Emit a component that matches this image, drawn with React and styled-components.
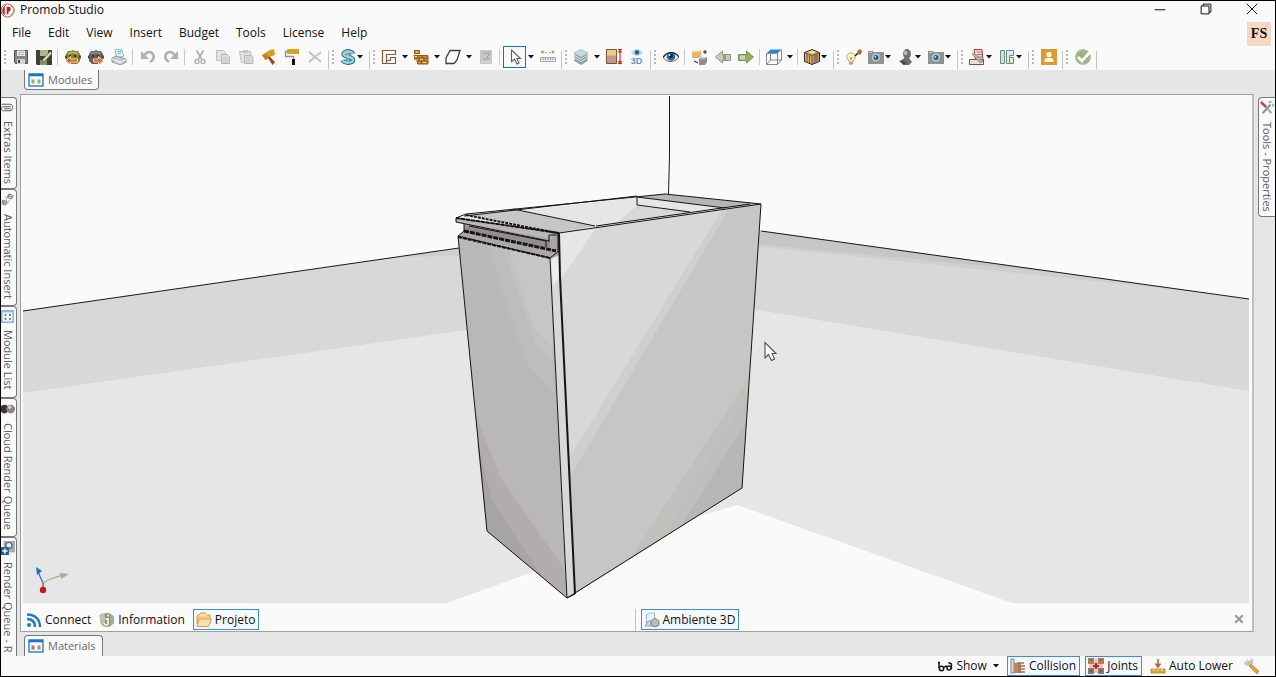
import React from 'react';
import styled, { createGlobalStyle, css } from 'styled-components';

const GlobalStyle = createGlobalStyle`
  *, *::before, *::after { box-sizing: border-box; }
  body { margin: 0; }
  body, button { font-family: "Open Sans", "Noto Sans", sans-serif; font-size: 12px; line-height: 16px; color: #111; }
  button { margin: 0; padding: 0; border: 0; background: none; }
  svg { display: block; flex: none; }
`;

const Frame = styled.div`
  display: flex;
  flex-direction: column;
  height: 100vh;
  border: 1px solid #000;
  background: #fafafa;
  overflow: hidden;
`;

const TitleBar = styled.header`
  display: flex;
  align-items: center;
  flex: none;
  height: 18px;
  padding-right: 17px;
  gap: 4px;
`;

const Title = styled.h1`
  flex: 1;
  margin: 0;
  font-size: 12px;
  font-weight: 400;
`;

const WindowButtons = styled.div`
  display: flex;
  gap: 34px;
  padding-bottom: 2px;
`;

const MenuBar = styled.nav`
  display: flex;
  align-items: flex-start;
  flex: none;
  height: 26px;
  padding: 2px 4px 0 11px;
  gap: 17px;
`;

const MenuItem = styled.button`
  height: 24px;
  white-space: nowrap;
`;

const Account = styled.button`
  flex: none;
  width: 24px;
  height: 24px;
  margin: 1px 0 0 auto;
  background: #f5d9c3;
  font: 700 14px/24px "Liberation Serif", serif;
`;

const ToolBar = styled.div`
  display: flex;
  align-items: flex-start;
  flex: none;
  height: 25px;
`;

const ToolGroup = styled.div`
  display: flex;
  align-items: center;
  flex: none;
  height: 24px;

  &::before {
    content: "";
    width: 2px;
    height: 14px;
    margin: 0 3px;
    background: repeating-linear-gradient(#b8b8b8 0 2px, transparent 2px 4px);
  }

  &::after {
    content: "";
    align-self: flex-end;
    width: 1px;
    height: 18px;
    margin-left: 2px;
    background: #c4c4c4;
  }
`;

const ToolButton = styled.button`
  display: flex;
  align-items: center;
  justify-content: center;
  flex: none;
  width: ${(p) => (p.$split ? 22 : 23)}px;
  height: 22px;
  ${(p) => p.$compact && css`
    width: 30px;
    justify-content: flex-start;
    gap: 1px;
    padding-left: 3px;
  `}
  ${(p) => p.$active && css`border: 1px solid #0a74d1;`}
`;

const ArrowButton = styled.button`
  display: flex;
  align-items: center;
  justify-content: center;
  width: 10px;
  height: 22px;
`;

const ToolSeparator = styled.span`
  width: 1px;
  height: 16px;
  margin: 0 3px 0 2px;
  background: #c8c8c8;
`;

const Workspace = styled.div`
  display: flex;
  flex: 1;
  min-height: 0;
  background: #e6e6e6;
`;

const Dock = styled.aside`
  display: flex;
  flex-direction: column;
  flex: none;
  width: ${(p) => (p.$side === 'left' ? 16 : 17)}px;
  padding-top: 27px;
  overflow: hidden;
`;

const DockTab = styled.button`
  display: flex;
  flex-direction: column;
  align-items: center;
  flex: none;
  width: 100%;
  height: ${(p) => p.$length}px;
  gap: 7px;
  border: 1px solid #777;
  background: #fafafa;
  color: #5c5c5c;
  font-size: 11px;
  ${(p) => (p.$side === 'left'
    ? css`padding: 3px 2px 0 0; border-left: 0; border-radius: 0 4px 4px 0;`
    : css`padding: 3px 0 0; border-right: 0; border-radius: 4px 0 0 4px;`)}
  ${(p) => p.$rest && css`
    flex: 1;
    border-bottom: 0;
    border-bottom-right-radius: 0;
  `}

  span { writing-mode: vertical-rl; white-space: nowrap; line-height: 14px; }
`;

const Center = styled.main`
  display: flex;
  flex-direction: column;
  flex: 1;
  min-width: 0;
  padding: 0 4px 0 3px;
`;

const PanelTabs = styled.div`
  display: flex;
  flex: none;
  height: 24px;
  padding: ${(p) => (p.$place === 'top' ? '0 4px 4px' : '3px 4px 0')};
`;

const PanelTab = styled.button`
  display: flex;
  align-items: center;
  gap: 4px;
  padding: 0 6px 0 3px;
  border: 1px solid #777;
  background: #fafafa;
  color: #6a6a6a;
  font-size: 11px;
  ${(p) => (p.$place === 'top'
    ? css`border-top: 0; border-radius: 0 0 4px 4px;`
    : css`border-bottom: 0; border-radius: 4px 4px 0 0;`)}
`;

const Viewport = styled.section`
  display: flex;
  flex-direction: column;
  flex: 1;
  min-height: 0;
  padding: 1px 3px 0 2px;
  border: 1px solid #a0a0a0;
  border-right: 2px solid #c0c0c0;
  background: #fafafa;
`;

const Scene = styled.svg`
  flex: 1;
  width: 100%;
  min-height: 0;
`;

const DocumentBar = styled.div`
  display: flex;
  align-items: flex-end;
  flex: none;
  height: 28px;
`;

const DocumentHalf = styled.div`
  display: flex;
  align-items: flex-start;
  flex: 1;
  height: 22px;
  gap: 8px;
  padding-left: ${(p) => (p.$second ? 5 : 3)}px;
  border-left: ${(p) => (p.$second ? '1px solid #c4c4c4' : '0')};
`;

const LabelButton = styled.button`
  display: flex;
  align-items: center;
  flex: none;
  height: ${(p) => (p.$tall ? 21 : 20)}px;
  gap: 3px;
  white-space: nowrap;
  ${(p) => p.$active && css`
    padding: 0 3px 0 2px;
    border: 1px solid #3b8ede;
    background: #f6f9fc;
  `}
`;

const CloseButton = styled.button`
  margin: 5px 5px 0 auto;
`;

const StatusBar = styled.footer`
  display: flex;
  align-items: center;
  justify-content: flex-end;
  flex: none;
  height: 20px;
  padding-right: 15px;
`;

const StatusItem = styled.div`
  margin-left: ${(p) => p.$gap}px;
`;

const Svg = ({ s = 16, children, ...rest }) => (
  <svg width={s} height={s} viewBox="0 0 16 16" fill="none" aria-hidden="true" {...rest}>{children}</svg>
);

const Arrow = () => (
  <svg width="6" height="4" viewBox="0 0 6 4" aria-hidden="true"><path d="M0 0h6L3 3.5z" fill="#111" /></svg>
);

const Robot = ({ body, lid, dir }) => (
  <Svg>
    <path d="M1 5l2-3h3l2-1 2 1h3l2 3v7l-3 3H4l-3-3z" fill={body} />
    <path d="M3 5c2-2 8-2 10 0" stroke={lid} strokeWidth="2" />
    <path d="M0 8h2M14 8h2" stroke="#4b4b45" strokeWidth="3" />
    <path d="M4 7h2M9 7h2" stroke="#24241c" strokeWidth="1.500" />
    {dir === 'left'
      ? <path d="M1 11.500l4.500-4v2.500h7v3h-7v2.500z" fill="#dd6420" stroke="#fff0d8" strokeWidth=".8" />
      : <path d="M15 11.500l-4.500-4v2.500h-5v3h5v2.500z" fill="#dd6420" stroke="#fff0d8" strokeWidth=".8" />}
  </Svg>
);

const Camera = () => (
  <Svg>
    <path d="M0 2h5v1h11v12H0z" fill="#8d9496" />
    <path d="M1 3.500h3" stroke="#c8cccc" />
    <circle cx="8" cy="8.500" r="4" fill="#b9c9d0" />
    <circle cx="8" cy="8.500" r="2.500" fill="#315a78" />
    <circle cx="7.300" cy="7.800" r=".9" fill="#d9eaf2" />
  </Svg>
);

const Panel = ({ a, b }) => (
  <Svg>
    <rect x="1" y="2" width="14" height="12" fill="#f4f8fa" stroke="#2a7fd0" strokeWidth="1.400" />
    <path d="M1 3h14" stroke="#1c73ca" strokeWidth="2.500" />
    <rect x="3.500" y="7.500" width="3" height="4" fill={a} />
    <rect x="9.500" y="7.500" width="3" height="4" fill={b} />
  </Svg>
);

const icons = {
  logo: (
    <Svg s={15}>
      <circle cx="7" cy="8" r="7" fill="#fff" stroke="#9c5a3c" />
      <path d="M7 2a6 6 0 0 0-3 11V5c0-2 1-3 3-3z" fill="#c32424" />
      <path d="M6 4h3a3 3 0 0 1 0 5H8v3H6z" fill="#b81f1f" />
      <path d="M10 2.500a6 6 0 0 1 0 11" stroke="#c98a62" strokeWidth="1.500" />
    </Svg>
  ),
  save: (
    <Svg>
      <path d="M1.500 1.500h13v13h-12l-1-1z" fill="#858585" stroke="#4f4f4f" />
      <path d="M4 1.500h8V7H4z" fill="#e9edf0" /><path d="M5 3.500h6M5 5.500h6" stroke="#9aa" strokeWidth=".8" />
      <path d="M4 10h8v5H4z" fill="#d4d4d4" /><path d="M5 11h2v3H5z" fill="#444" />
    </Svg>
  ),
  saveAs: (
    <Svg>
      <path d="M0 1h16v15H1l-1-1z" fill="#3f4036" />
      <path d="M4 1h8v6H4z" fill="#a9bd8c" /><path d="M4 11h7v5H4z" fill="#7f9468" />
      <path d="M14.500 2L7 10l-1.500 3.500L9 12l7-7.500z" fill="#e2d9a8" stroke="#52602c" strokeWidth=".8" />
    </Svg>
  ),
  print: (
    <Svg>
      <path d="M4 1l6-1 3 7-7 2z" fill="#eaf5fc" stroke="#7db6dc" />
      <path d="M6 3l4-1M7 5l3-1" stroke="#59a5d8" />
      <path d="M1 9l4-2 10 3v3l-5 3-9-3z" fill="#c4c6c8" stroke="#808488" strokeWidth=".8" />
      <path d="M1 10l9 3 5-2.500M4 12.500l6 2" stroke="#f2f2f2" />
    </Svg>
  ),
  undo: <Svg><path d="M1 2v8h8z" fill="#b0b0b0" /><path d="M4 7c2-4 5-5 8-3 3 3 2 7-2 9" stroke="#b0b0b0" strokeWidth="2.500" /></Svg>,
  redo: <Svg><path d="M15 2v8H7z" fill="#b0b0b0" /><path d="M12 7C10 3 7 2 4 4c-3 3-2 7 2 9" stroke="#b0b0b0" strokeWidth="2.500" /></Svg>,
  cut: <Svg><path d="M4.500 1.500l5.500 9M11.500 1.500l-5.500 9" stroke="#ababab" strokeWidth="1.600" /><circle cx="5" cy="12.500" r="2" stroke="#b5b5b5" strokeWidth="1.500" /><circle cx="11" cy="12.500" r="2" stroke="#b5b5b5" strokeWidth="1.500" /></Svg>,
  copy: <Svg><path d="M1.500 1.500h7l2 2v8h-9z" fill="#e2e2e2" stroke="#bcbcbc" /><path d="M6.500 5.500h6l2 2v7h-8z" fill="#dedede" stroke="#b4b4b4" /><path d="M8 9h5M8 11h5M8 13h5" stroke="#bbb" strokeWidth=".7" /></Svg>,
  paste: <Svg><path d="M1.500 2.500h11l1 11h-10z" fill="#e4e4e4" stroke="#bbb" /><path d="M5 1h5v3H5z" fill="#c2c2c2" /><path d="M6.500 6.500h7l1.500 2v6H6.500z" fill="#dcdcdc" stroke="#b4b4b4" /><path d="M8 9h5M8 11h5M8 13h5" stroke="#bbb" strokeWidth=".7" /></Svg>,
  hammer: <Svg><path d="M1 6l8-5 4-1 1 6-6 2-3 3z" fill="#d99a2c" /><path d="M1 6l3.500 5 3-2-2-4z" fill="#bf7f1c" /><path d="M8 7l6 6-2.500 3-4.500-7z" fill="#8b4a1c" /></Svg>,
  roller: <Svg><path d="M3 0h12v5H3z" fill="#d6a32c" /><path d="M3 2.500H1.500V7.500H9.500V10" stroke="#8e8e8e" strokeWidth="1.300" /><path d="M8 10h3v6H8z" fill="#111" /></Svg>,
  remove: <Svg><path d="M2 3l12 10M14 3L2 13" stroke="#c2c2c2" strokeWidth="2" /></Svg>,
  dollar: (
    <Svg>
      <path d="M8 0v16" stroke="#38718f" strokeWidth="3.400" />
      <path d="M13 5c-1-3-9.500-3.500-9.500 0 0 3.500 9.500 2 9.500 6 0 3.500-9 3.500-10.500 0" stroke="#2f6d92" strokeWidth="4.400" />
      <path d="M13 5c-1-3-9.500-3.500-9.500 0 0 3.500 9.500 2 9.500 6 0 3.500-9 3.500-10.500 0" stroke="#9ad0dc" strokeWidth="2.400" />
      <path d="M8 1v14" stroke="#9ad0dc" strokeWidth="1.400" /><path d="M4 4l3 1M9 3l3 1" stroke="#b5d76a" />
    </Svg>
  ),
  walls: <Svg><path d="M1.500 14.500v-13h13v4h-9v9z" stroke="#8a5a3c" strokeWidth="1.200" /><path d="M5.500 14.500h9v-6h-5v3h-4" stroke="#6b625c" strokeWidth="1.100" /></Svg>,
  bricks: (
    <Svg>
      <path d="M1 1h5v4H1zM1 7h9v4H1zM5 11h10v4H5zM10 7h5v4h-5z" fill="#d18a35" />
      <path d="M1.500 1.500h5v3h-5zM.500 6.500h14.500M1 9h14M3 12h12M4 6.500v2.500M9 6.500v2.500M6 9v3M11 9v3M8.500 12v3M4.500 12v3H15v-8.500" stroke="#8c4812" strokeWidth=".9" />
      <path d="M2 7.700h2M7 10.500h3M10 13.500h3M3 3h2" stroke="#fae0b6" />
    </Svg>
  ),
  shape: <Svg><path d="M5 1.500h10l-3 9.500-3 3.500H1V9z" fill="#fdfdfd" stroke="#4b3344" strokeWidth="1.300" /></Svg>,
  report: <Svg><path d="M2 1h12v14H2z" fill="#c6c6c6" /><path d="M5 4h6v2l-2 2 2 2M5 10h6" stroke="#a0a0a0" /><path d="M3 13h10" stroke="#e2e2e2" /></Svg>,
  pointer: <Svg><path d="M4.500 1v11.500l3-2.500 2.500 5 2-1-2.200-4.500h3.700z" fill="#fff" stroke="#6c5860" strokeWidth="1.100" /></Svg>,
  measure: <Svg><circle cx="2.500" cy="3" r="1.500" fill="#d29a45" /><circle cx="13" cy="3" r="1.500" fill="#d29a45" /><path d="M5 3.500h1.500M9 3.500h1.500" stroke="#999" /><path d="M.500 8.500h15v4H.500z" fill="#e8e8e8" stroke="#aaa" /><path d="M3 9v2M5.500 9v2M8 9v2M10.500 9v2M13 9v2" stroke="#888" strokeWidth=".8" /></Svg>,
  layers: (
    <Svg>
      <path d="M1.500 5L8 8l6.500-3v7L8 16l-6.500-4z" fill="#8d9aa2" />
      <path d="M1.500 6.500L8 10l6.500-3.500M1.500 9L8 12.500 14.500 9" stroke="#dfe7ea" />
      <path d="M8 .500L15 4 8 8 1 4z" fill="#c8dce8" stroke="#95a8b2" strokeWidth=".7" />
    </Svg>
  ),
  door: <Svg><path d="M.500.500h10v14H.500z" fill="#f0cf7c" stroke="#6e5941" /><path d="M1 7c4-2 6 1 9-1v8H1z" fill="#c49a86" /><path d="M12 .500h4M12 14.500h4M14 1v13M12.500 3.500L14 1l1.500 2.500M12.500 12L14 14.500l1.500-2.500" stroke="#d12c24" strokeWidth="1.200" /></Svg>,
  eye: <Svg><path d="M0 8.500C4 2 12 2 16 8c-4 6-12 6-16 .500z" fill="#e6edf2" stroke="#574850" strokeWidth=".8" /><circle cx="8" cy="7.500" r="4.300" fill="#2a6da4" /><circle cx="8" cy="7" r="2" fill="#0c2440" /><circle cx="6.500" cy="6" r="1" fill="#e4f2fa" /><path d="M0 8.500C4 2 12 2 16 8" stroke="#332830" strokeWidth="1.300" /></Svg>,
  boxes: <Svg><path d="M0 3l2-2h7v6L7 9H0z" fill="#e7b56a" /><path d="M0 3l2-2h7L7 3z" fill="#fae0b4" /><path d="M7 10l2-2h6v5l-2 3H7z" fill="#8a8e8c" /><path d="M7 10l2-2h6l-2 2z" fill="#c6cac8" /><path d="M13 1v4M11 3h4M2 12l4 2" stroke="#3c2a40" strokeWidth="1.100" /></Svg>,
  prev: <Svg><path d="M.500 8l7-6v3.500h8v6h-8V14z" fill="#c7ccc0" stroke="#8c9285" /><path d="M8 5.500h3v6H8z" fill="#8faa5c" /></Svg>,
  next: <Svg><path d="M15.500 8l-7-6v3.500h-8v6h8V14z" fill="#96b255" stroke="#7b8e5c" /><path d="M2 6.500h5v4H2z" fill="#ccd4bc" /></Svg>,
  wireCube: <Svg><path d="M4.500.500h11l-4 4H.500z" fill="#2b87cb" /><path d="M.500 4.500h11v11H.500zM11.500 15.500l4-4.500V.500M.500 15.500l4-4.500h11M4.500 5v6" stroke="#7e8a92" /></Svg>,
  woodCube: <Svg><path d="M8 .500l7.500 3v9L8 15.500l-7.500-3v-9z" fill="#d7b36e" stroke="#3f262b" /><path d="M.500 3.500L8 6.500l7.500-3M8 6.500v9M3 5v8M5.500 5.500v9M11 5.500v8M13 5v8" stroke="#5b373a" strokeWidth=".8" /><path d="M4 3l4 1.500L12 3 8 1.500z" fill="#f4dca6" /><path d="M8 7v8l7-3V4z" fill="#8a4f48" fillOpacity=".3" /></Svg>,
  bulb: <Svg><path d="M3 12C-1 8 1 4 5 4s6 4 2 8v1H3z" fill="#fdf3e0" stroke="#dba24a" /><path d="M3 14.500h4" stroke="#999" strokeWidth="2" /><path d="M4 8l1 3 1-3" stroke="#e09a30" /><path d="M9 7l3-3" stroke="#222" strokeWidth="1.500" /><path d="M11 2l3-2 2 2-1 3-2 1z" fill="#b96a1e" /></Svg>,
  camera: <Camera />,
  render: <Svg><path d="M3 12l3-3h5l3 4-3 3H5z" fill="#707070" /><ellipse cx="9" cy="5" rx="4" ry="5" fill="#747474" /><circle cx="7.500" cy="4" r="2" fill="#bcbcbc" /><path d="M1 12l4-1 4 3-3 2z" fill="#4e4e4e" /></Svg>,
  docs: <Svg><path d="M5 .500h8l1 12H7z" fill="#f5e4dc" stroke="#a93b33" /><path d="M7.500 3h5M8 5.500h5M8.500 8h5" stroke="#b7584c" /><path d="M.500 10.500h14v5h-14z" fill="#f0dfcf" stroke="#a93b33" /><path d="M3 5l2-1 9 8-3 2z" fill="#aeb4b6" stroke="#72787a" strokeWidth=".7" /></Svg>,
  plan: <Svg><path d="M1.500 1.500h4v13h-4z" fill="#c6e3e6" stroke="#6d8b80" /><path d="M7.500 14.500v-13h7v5h-4v8z" fill="#dcecea" stroke="#6d8b80" /><path d="M10.500 8.500h4v6h-4z" fill="#e8ead0" stroke="#7d8a64" /></Svg>,
  person: <Svg><path d="M0 0h16v16H0z" fill="#dc9a30" /><circle cx="8" cy="5.500" r="2.700" fill="#fff5dc" /><path d="M3.500 13V11c0-3 9-3 9 0v2z" fill="#fff5dc" /></Svg>,
  check: <Svg><circle cx="8" cy="8" r="7.800" fill="#96b472" /><circle cx="8" cy="8" r="6.500" stroke="#a9b59c" strokeWidth="1.500" /><path d="M3 8l4 4 8-9" stroke="#fff" strokeWidth="2.800" /></Svg>,
  modules: <Panel a="#a5ad62" b="#a5ad62" />,
  materials: <Panel a="#8a8078" b="#c88850" />,
  rss: <Svg><circle cx="3" cy="13" r="2" fill="#2478c8" /><path d="M1 7c5 0 8 3 8 8M1 2.500c8 0 13 5 13 12.500" stroke="#2478c8" strokeWidth="2.400" /></Svg>,
  info: <Svg><circle cx="8" cy="8" r="7" fill="#839c64" /><path d="M0 3l4-2 2 2v8l-4 1z" fill="#c0c0ba" /><path d="M11 2l4 2v7l-4 3z" fill="#a4a8a0" /><path d="M9 2.500v2M6.500 7H9v5c-1 2-4 1-4-1" stroke="#f0f2e4" strokeWidth="1.800" /></Svg>,
  folder: <Svg><path d="M1 4l4-3h4l1 2h4v9H1z" fill="#f2d08c" stroke="#d09a3a" /><path d="M3 7h12.500l-3 7.500H1z" fill="#fae2ae" stroke="#d8a040" /><path d="M4 3h7" stroke="#fff8e4" /></Svg>,
  ambiente: <Svg><path d="M2.500 13V3l3-2h5v9" fill="#e7f2fa" stroke="#90bcdc" /><path d="M1 14l3-5h6l4 5z" fill="#c6d8e2" stroke="#7e98a8" strokeWidth=".8" /><path d="M7 9l4-3 4 3v4l-4 2-4-2z" fill="#bababa" stroke="#717171" strokeWidth=".8" /></Svg>,
  glasses: <Svg><path d="M2 4v6M1 4.500h2" stroke="#161616" strokeWidth="1.500" /><circle cx="4.500" cy="10.500" r="2.200" stroke="#161616" strokeWidth="1.500" /><circle cx="12" cy="10" r="2" stroke="#161616" strokeWidth="1.500" /><path d="M7 9l3-1M14.500 11V6l-3-1.500" stroke="#161616" strokeWidth="1.400" /></Svg>,
  collision: <Svg><path d="M1 1h3v14H1z" fill="#dae2e6" stroke="#77828a" /><path d="M4 5h7v10H4z" fill="#b98364" /><path d="M7 5h7M8 8h7M8 11h7M8 14h7" stroke="#a86d4a" strokeWidth="1.400" /></Svg>,
  joints: <Svg><path d="M0 0h6v6H0zM10 0h6v6h-6z" fill="#b57d5c" /><path d="M0 10h6v6H0zM10 10h6v6h-6z" fill="#8c776a" /><path d="M6 1h4v14H6zM1 6h14v4H1z" fill="#e4cbb6" /><path d="M2 2h2M12 2h2M2 13h2M12 13h2" stroke="#5e463a" /><path d="M8 5v6M5 8h6" stroke="#d41c24" strokeWidth="2" /></Svg>,
  lower: <Svg><path d="M8 1v7M5.500 5.500L8 9l2.500-3.500" stroke="#b9623a" strokeWidth="1.600" /><path d="M1 11h14v4H1z" fill="#e0a640" stroke="#b98428" strokeWidth=".8" /><path d="M4 11v2M8 11v2M12 11v2" stroke="#fff0c4" /></Svg>,
  wrench: <Svg><path d="M2 0l2 3 3-1V0c3 2 3 4 1 7L5 8C2 8 0 6 0 3l3 2" fill="#c2c4c4" /><path d="M7 6l8 7-2 3-8-8z" fill="#dfa33c" stroke="#b67f22" strokeWidth=".6" /></Svg>,
  clip: <Svg s={13}><path d="M1 4h10c4.500 0 4.500 8 0 8H3c-3.500 0-3.500-5 0-5h9M4 9.500h8" stroke="#555" strokeWidth="1.200" /></Svg>,
  auto: <Svg s={14}><path d="M9 1l5 2-2 4-5-2zM2 8l5 2-2 4-4-2z" fill="#ddd" stroke="#777" /><path d="M8 3l5 2M2 10l4 2M10 1L8 5M4 9l-2 4" stroke="#777" /><path d="M5 4l2 6M10 8l-3 5" stroke="#aaa" /></Svg>,
  list: <Svg s={13}><path d="M1 1h14v14H1z" fill="#eef6fc" stroke="#6aa5d4" strokeWidth="1.500" /><path d="M1 2h14" stroke="#8abce2" strokeWidth="2" /><path d="M4.500 6h2M10 6h2M4.500 11h2M10 11h2" stroke="#5b6540" strokeWidth="2.200" /></Svg>,
  cloud: <Svg s={14}><circle cx="4" cy="8" r="5" fill="#43302e" /><circle cx="11" cy="8" r="5" fill="#858585" /><circle cx="10" cy="6" r="2" fill="#d0d0d0" /></Svg>,
  queue: <Svg s={14}><path d="M3 0h13v13H3z" fill="#a8acb0" /><circle cx="9" cy="5" r="3.500" stroke="#50708a" strokeWidth="1.500" fill="#e4eaf0" /><path d="M0 7h9v9H0z" fill="#1d5c94" /><path d="M4.500 8.500v6M1.500 11.500h6" stroke="#fff" strokeWidth="1.600" /></Svg>,
  tools: <Svg s={14}><path d="M1 1l6 6" stroke="#c8402c" strokeWidth="2.800" /><path d="M9 9l4 5" stroke="#a5adb2" strokeWidth="2.400" /><path d="M12 4L3 14" stroke="#7c919e" strokeWidth="2.200" /><path d="M10 2l3-2M14 6l2-3" stroke="#98a4aa" strokeWidth="2" /></Svg>,
  importer: <Robot body="#85852f" lid="#b3b45c" dir="left" />,
  exporter: <Robot body="#66605c" lid="#8f8b88" dir="right" />,
};

const View3dIcon = styled.span`
  display: flex;
  flex-direction: column;
  align-items: center;
  color: #5c97c0;
  font: 700 9px/10px "Liberation Sans", sans-serif;
`;

icons.eye3d = (
  <View3dIcon>
    <svg width="12" height="7" viewBox="0 0 14 8" aria-hidden="true">
      <path d="M0 4c4-5 10-5 14 0-4 5-10 5-14 0z" fill="#b9d9ec" /><circle cx="7" cy="4" r="2.800" fill="#2d77ab" /><circle cx="7" cy="3.500" r="1" fill="#102a44" />
    </svg>
    3D
  </View3dIcon>
);

const toolGroups = [
  [
    ['save', 'Save'], ['saveAs', 'Save as'], null,
    ['importer', 'Import'], ['exporter', 'Export'], ['print', 'Print'], null,
    ['undo', 'Undo'], ['redo', 'Redo'], null,
    ['cut', 'Cut'], ['copy', 'Copy'], ['paste', 'Paste'], ['hammer', 'Build'], ['roller', 'Paint'], ['remove', 'Delete'],
  ],
  [['dollar', 'Budget', 'compact']],
  [
    ['walls', 'Walls', 'split'], ['bricks', 'Bricks', 'split'], ['shape', 'Shape', 'split'], ['report', 'Report'], null,
    ['pointer', 'Select', 'active'], ['measure', 'Measure'],
  ],
  [['layers', 'Layers', 'split'], ['door', 'Height'], ['eye3d', '3D view']],
  [
    ['eye', 'Visibility'], null, ['boxes', 'Explode'], ['prev', 'Previous'], ['next', 'Next'], null,
    ['wireCube', 'Views', 'split'], null, ['woodCube', 'Texture', 'compact'],
  ],
  [['bulb', 'Lights'], ['camera', 'Photo', 'compact'], ['render', 'Render', 'compact'], ['camera', 'Camera', 'compact']],
  [['docs', 'Documents', 'compact'], ['plan', 'Plan', 'compact']],
  [['person', 'Customer']],
  [['check', 'Validate']],
];

const leftTabs = [
  ['clip', 'Extras Items', 92],
  ['auto', 'Automatic Insert', 117],
  ['list', 'Module List', 92],
  ['cloud', 'Cloud Render Queue', 139],
  ['queue', 'Render Queue - R', 0],
];

const Tool = ({ icon, label, kind }) => {
  const split = kind === 'split';
  const active = kind === 'active';
  const compact = kind === 'compact';
  return (
    <>
      <ToolButton aria-label={label} $split={split} $compact={compact} $active={active}>
        {icons[icon]}
        {compact && <Arrow />}
      </ToolButton>
      {(split || active) && <ArrowButton aria-label={`${label} options`}><Arrow /></ArrowButton>}
    </>
  );
};

const CabinetScene = () => (
  <Scene viewBox="23 96 1226 507" preserveAspectRatio="xMidYMid slice" role="img" aria-label="Cabinet in 3D environment">
    <path d="M23 96h1226v507H23z" fill="#fafafa" />
    <path d="M23 311L470 246v100L23 400z" fill="#d8d8d6" />
    <path d="M400 257l60-9v8z" fill="#d0ced0" />
    <path d="M750 229l499 70v100l-500-70z" fill="#d8d8d6" />
    <path d="M755 230l445 62-445-46z" fill="#d0ced0" />
    <path d="M755 230l305 43-305-29z" fill="#c8c6c4" />
    <path d="M23 393l450-64 90 232-33 12-83 30H23z" fill="#e6e6e6" />
    <path d="M740 307l509 84v212h-237l-275-98-60 18z" fill="#e6e6e6" />
    <path d="M23 311l436-63M761 231l488 68" stroke="#1a1a1a" fill="none" />
    <path d="M669.500 96v60l-1 38" stroke="#1a1a1a" fill="none" />

    <path d="M456 218l209-24 96 10-202 29z" fill="#e6e6e6" />
    <path d="M637 206l53 6-75 12z" fill="#d8d8d6" />
    <path d="M470 215l43-6 82 17-36 7z" fill="#c8c6c4" />
    <path d="M637 197l28-3 96 10-36 4z" fill="#b6b5b3" />

    <path d="M559 233l202-29-19 284-167 106z" fill="#c8c6c4" />
    <path d="M559 233l164-24L570 457z" fill="#d8d8d6" />
    <path d="M559 233l37-5-35 51z" fill="#e6e6e6" />
    <path d="M722 210l7-1-158 266-1-18z" fill="#d0ced0" />
    <path d="M749 377l-1 16-88 147-30 19z" fill="#c2c0bd" />
    <path d="M748 393l-6 95-81 51z" fill="#bfbebc" />
    <path d="M746 423l-4 65-62 39z" fill="#b9b7b5" />

    <path d="M458 236l92 22 17 340-80-67z" fill="#b9b8b6" />
    <path d="M487 243l62 16 5 134-28-31z" fill="#bebdbb" />
    <path d="M503 248l47 11 3 106-19-24z" fill="#c2c1bd" />
    <path d="M509 249l41 10 3 88-20-20z" fill="#c8c6c4" />
    <path d="M475 413l25 64 64 91 3 30-80-67z" fill="#b1adae" />
    <path d="M477 440l15 60 51 78-56-47z" fill="#a6a5a4" />
    <path d="M550 258l9-4 16 340-8 4z" fill="#d8d8d6" />
    <path d="M551 259l8-3 1 20-7 10z" fill="#ececec" />

    <path d="M456 218l97 15 6 2v20l-9 4-92-22 6-6v-7l-8-2z" fill="#a9a6a6" />
    <path d="M456 218l97 15-1 6-95-17z" fill="#bab8b6" />
    <path d="M464 225l86 17v7l-86-17z" fill="#958e90" />
    <path d="M458 236l6-4 92 19-6 7z" fill="#aaa8a8" />

    <g stroke="#151515" fill="none" strokeWidth="1">
      <path d="M456 218l103 15 202-29-96-10-199 20-10 4v4l93 19M513 209l82 17M637 197v8l53 7M637 197l88 11M464 216l173-20M596 226l154-22" />
      <path d="M458 236l29 295 80 67 175-110 19-284M550 258l17 340 8-4M550 258l9-7M458 236l92 22M464 224v7l-6 5M549 242v-7h9v17M469 226l77 15v6" />
      <path d="M559 233l1 44 15 317" strokeWidth="2" />
      <path d="M456 218l103 15M458 237l92 21" strokeWidth="2" strokeDasharray="4 1" />
      <path d="M464 231l92 20" strokeWidth="3" strokeDasharray="5 1" />
      <path d="M466 215l91 18" strokeWidth="2" strokeDasharray="3 1" />
    </g>

    <path d="M765 342.500v15.500l3.500-3.500 3 6 3-1.500-2.500-5.500h4z" fill="#fff" stroke="#5c4650" strokeWidth="1.100" />
    <g fill="none" strokeWidth="1.200">
      <path d="M43 583l-5-11" stroke="#1574cb" /><path d="M43 583c7-5 14-6 20-8" stroke="#9db48e" /><path d="M43 583v7" stroke="#b91f1f" />
    </g>
    <path d="M36 567l6 4-5 4z" fill="#1574cb" /><path d="M60 573l9 1-8 5z" fill="#9db48e" /><circle cx="43" cy="590" r="3.200" fill="#b91f1f" />
  </Scene>
);

export default function App() {
  return (
    <>
      <GlobalStyle />
      <Frame>
        <TitleBar>
          {icons.logo}
          <Title>Promob Studio</Title>
          <WindowButtons>
            <button aria-label="Minimize"><Svg s={12}><path d="M1 9h14" stroke="#111" strokeWidth="1.400" /></Svg></button>
            <button aria-label="Restore"><Svg s={12}><path d="M4 4V1.500h10.500V12H12M1.500 4h10.500v10.500H1.500z" stroke="#111" strokeWidth="1.300" /></Svg></button>
            <button aria-label="Close"><Svg s={12}><path d="M1 1l14 14M15 1L1 15" stroke="#111" strokeWidth="1.300" /></Svg></button>
          </WindowButtons>
        </TitleBar>
        <MenuBar>
          {['File', 'Edit', 'View', 'Insert', 'Budget', 'Tools', 'License', 'Help'].map((m) => <MenuItem key={m}>{m}</MenuItem>)}
          <Account aria-label="Account FS">FS</Account>
        </MenuBar>
        <ToolBar role="toolbar">
          {toolGroups.map((group, g) => (
            <ToolGroup key={g}>
              {group.map((t, i) => (t ? <Tool key={i} icon={t[0]} label={t[1]} kind={t[2]} /> : <ToolSeparator key={i} />))}
            </ToolGroup>
          ))}
        </ToolBar>
        <Workspace>
          <Dock $side="left">
            {leftTabs.map(([icon, label, length]) => (
              <DockTab key={label} $side="left" $length={length} $rest={!length}>{icons[icon]}<span>{label}</span></DockTab>
            ))}
          </Dock>
          <Center>
            <PanelTabs $place="top"><PanelTab $place="top">{icons.modules}Modules</PanelTab></PanelTabs>
            <Viewport>
              <CabinetScene />
              <DocumentBar>
                <DocumentHalf>
                  <LabelButton $tall>{icons.rss}Connect</LabelButton>
                  <LabelButton $tall>{icons.info}Information</LabelButton>
                  <LabelButton $tall $active>{icons.folder}Projeto</LabelButton>
                </DocumentHalf>
                <DocumentHalf $second>
                  <LabelButton $tall $active>{icons.ambiente}Ambiente 3D</LabelButton>
                  <CloseButton aria-label="Close view"><Svg s={10}><path d="M2 2l12 12M14 2L2 14" stroke="#999" strokeWidth="3.400" /></Svg></CloseButton>
                </DocumentHalf>
              </DocumentBar>
            </Viewport>
            <PanelTabs $place="bottom"><PanelTab $place="bottom">{icons.materials}Materials</PanelTab></PanelTabs>
          </Center>
          <Dock $side="right">
            <DockTab $side="right" $length={120}>{icons.tools}<span>Tools - Properties</span></DockTab>
          </Dock>
        </Workspace>
        <StatusBar>
          <StatusItem><LabelButton>{icons.glasses}Show&nbsp;<Arrow /></LabelButton></StatusItem>
          <StatusItem $gap={8}><LabelButton $active>{icons.collision}Collision</LabelButton></StatusItem>
          <StatusItem $gap={5}><LabelButton $active>{icons.joints}Joints</LabelButton></StatusItem>
          <StatusItem $gap={8}><LabelButton>{icons.lower}Auto Lower</LabelButton></StatusItem>
          <StatusItem $gap={11}><LabelButton aria-label="Settings">{icons.wrench}</LabelButton></StatusItem>
        </StatusBar>
      </Frame>
    </>
  );
}
